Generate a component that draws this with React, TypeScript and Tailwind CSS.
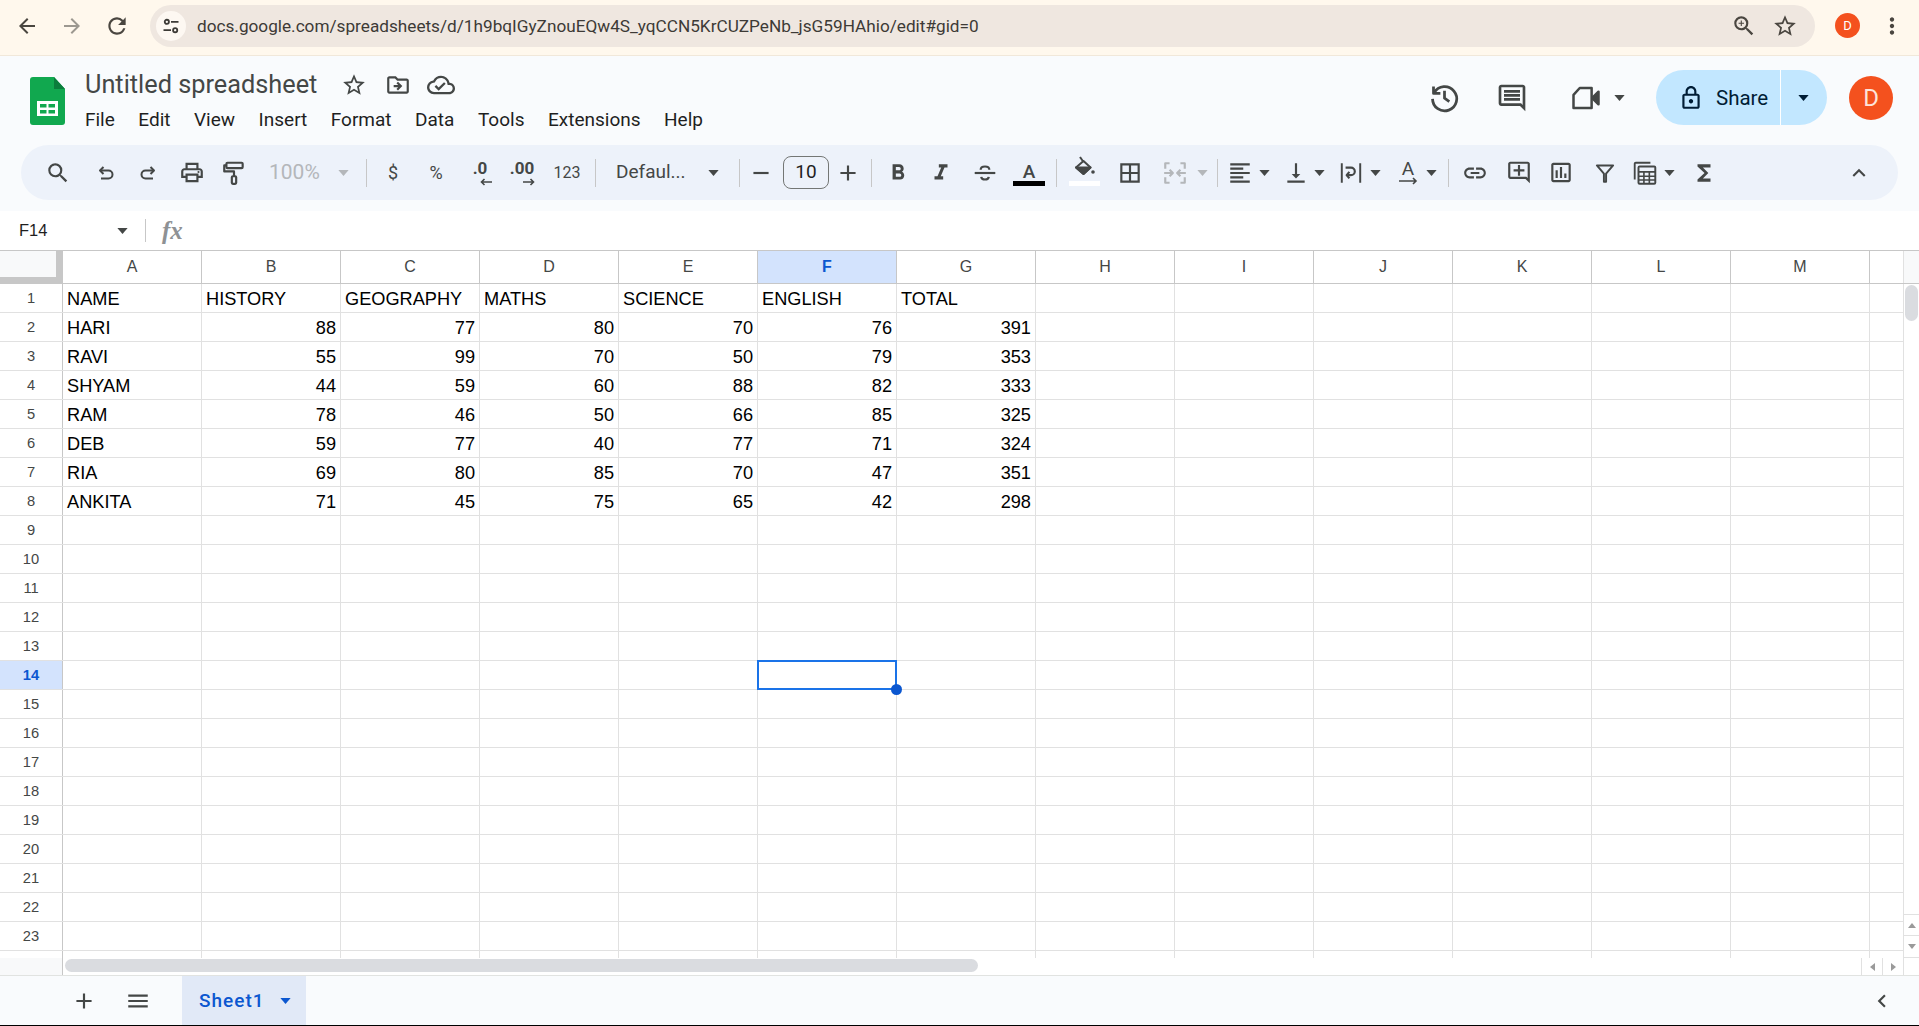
import type { ReactNode } from "react";
import {
  MdArrowBack,
  MdArrowForward,
  MdRefresh,
  MdZoomIn,
  MdStarBorder,
  MdMoreVert,
  MdOutlineDriveFileMove,
  MdOutlineCloudDone,
  MdOutlineComment,
  MdOutlineLock,
  MdSearch,
  MdOutlinePrint,
  MdFormatBold,
  MdFormatItalic,
  MdBorderAll,
  MdFormatAlignLeft,
  MdVerticalAlignBottom,
  MdLink,
  MdOutlineAddComment,
  MdOutlineInsertChart,
  MdFunctions,
  MdExpandLess,
  MdAdd,
  MdRemove,
  MdMenu,
  MdChevronLeft,
} from "react-icons/md";

const COLS = ["A", "B", "C", "D", "E", "F", "G", "H", "I", "J", "K", "L", "M"];

const DATA: string[][] = [
  ["NAME", "HISTORY", "GEOGRAPHY", "MATHS", "SCIENCE", "ENGLISH", "TOTAL"],
  ["HARI", "88", "77", "80", "70", "76", "391"],
  ["RAVI", "55", "99", "70", "50", "79", "353"],
  ["SHYAM", "44", "59", "60", "88", "82", "333"],
  ["RAM", "78", "46", "50", "66", "85", "325"],
  ["DEB", "59", "77", "40", "77", "71", "324"],
  ["RIA", "69", "80", "85", "70", "47", "351"],
  ["ANKITA", "71", "45", "75", "65", "42", "298"],
];

const ROWS = Array.from({ length: 24 }, (_, i) => i + 1);

function Caret({ className = "", color = "fill-[#444746]" }: { className?: string; color?: string }) {
  return (
    <svg viewBox="0 0 12 7" className={`w-[11px] h-[6px] mr-px shrink-0 ${color} ${className}`}>
      <path d="M0 0h12L6 7z" />
    </svg>
  );
}

function Sep({ className = "" }: { className?: string }) {
  return <div className={`w-px h-7 shrink-0 bg-[#c7c7c7] ${className}`} />;
}

// fixed size slot, so the toolbar icons keep their spacing
function Ic({ className = "", children }: { className?: string; children: ReactNode }) {
  return (
    <span className={`flex items-center justify-center w-[26px] h-[26px] shrink-0 text-[#444746] ${className}`}>
      {children}
    </span>
  );
}

function Stroke({ size = 26, children }: { size?: number; children: ReactNode }) {
  return (
    <svg
      viewBox="0 0 24 24"
      width={size}
      height={size}
      fill="none"
      stroke="currentColor"
      strokeWidth="2"
      strokeLinejoin="round"
    >
      {children}
    </svg>
  );
}

function Logo() {
  return (
    <svg viewBox="0 0 35 48" className="w-[35px] h-12 shrink-0 mt-[21px] ml-[30px]">
      <path d="M3 0h21l11 12v33a3 3 0 0 1-3 3H3a3 3 0 0 1-3-3V3a3 3 0 0 1 3-3z" fill="#11a84f" />
      <path d="M24 0l11 12H24z" fill="#0b7d3c" />
      <path d="M7 24h21v15H7z" fill="#fff" />
      <path d="M10 27h6.500v3.500H10zM18.500 27H25v3.500h-6.500zM10 33h6.500v3.500H10zM18.500 33H25v3.500h-6.500z" fill="#11a84f" />
    </svg>
  );
}

function BrowserBar() {
  return (
    <div className="h-14 shrink-0 flex items-start bg-[#fff8ed] border-b border-[#f1e8da] text-[#4a4640]">
      <MdArrowBack className="w-6 h-6 ml-[15px] mt-[14px] shrink-0" />
      <MdArrowForward className="w-6 h-6 ml-[21px] mt-[14px] shrink-0 text-[#9c9890]" />
      <MdRefresh className="w-[26px] h-[26px] ml-5 mt-[13px] shrink-0" />
      <div className="ml-[20px] mt-[5px] w-[1665px] h-[42px] shrink-0 rounded-full bg-[#efe7e0] flex items-center">
        <div className="ml-[6px] w-[30px] h-[30px] rounded-full bg-[#fdf8f2] flex items-center justify-center shrink-0">
          <svg viewBox="0 0 24 24" className="w-5 h-5" fill="none" stroke="#3c3a36" strokeWidth="2.2">
            <circle cx="7" cy="7" r="2.500" />
            <path d="M12 7h9M3 17h9" />
            <circle cx="17" cy="17" r="2.500" />
          </svg>
        </div>
        <span className="ml-[11px] pt-px text-[17.200px] text-[#3d3a36] font-['Roboto',sans-serif] whitespace-nowrap">
          docs.google.com/spreadsheets/d/1h9bqIGyZnouEQw4S_yqCCN5KrCUZPeNb_jsG59HAhio/edit#gid=0
        </span>
        <MdZoomIn className="w-[26px] h-[26px] ml-auto shrink-0" />
        <MdStarBorder className="w-[26px] h-[26px] ml-[15px] mr-[17px] shrink-0" />
      </div>
      <div className="ml-5 mt-[13px] w-[25px] h-[25px] rounded-full bg-[#f4511e] text-white text-[13px] flex items-center justify-center shrink-0 font-['Roboto',sans-serif]">
        D
      </div>
      <MdMoreVert className="w-[26px] h-[26px] ml-[19px] mt-[13px] shrink-0" />
    </div>
  );
}

function AppHeader() {
  const menu = ["File", "Edit", "View", "Insert", "Format", "Data", "Tools", "Extensions", "Help"];
  return (
    <div className="h-[89px] shrink-0 flex items-start bg-[#f9fbfd]">
      <Logo />
      <div className="ml-5 flex flex-col">
        <div className="mt-[15px] h-7 flex items-center text-[#444746]">
          <span className="text-[25.300px] leading-7 font-['Roboto',sans-serif] whitespace-nowrap">Untitled spreadsheet</span>
          <MdStarBorder className="w-[26px] h-[26px] ml-6" />
          <MdOutlineDriveFileMove className="w-[26px] h-[26px] ml-[18px]" />
          <MdOutlineCloudDone className="w-7 h-7 ml-4" />
        </div>
        <div className="mt-[9px] h-6 flex items-center gap-[23.500px] text-[19px] text-[#1f1f1f] font-['Roboto',sans-serif]">
          {menu.map((m) => (
            <span key={m}>{m}</span>
          ))}
        </div>
      </div>
      <div className="ml-auto mr-[26px] mt-[14px] flex items-center text-[#444746]">
        <Stroke size={33}>
          <path d="M4 4v5h5" />
          <path d="M4.500 8.500A8.800 8.800 0 1 1 3.300 13" />
          <path d="M12 7v5.500l3.500 2.500" />
        </Stroke>
        <MdOutlineComment className="w-8 h-8 ml-[35px]" />
        <span className="ml-[43px]">
          <svg viewBox="0 0 24 24" width="30" height="30" fill="none" stroke="currentColor" strokeWidth="2" strokeLinejoin="round">
            <path d="M2 9.500 7 4h9.500v16H2z" />
            <path d="M17 12l5-5v10z" fill="currentColor" />
          </svg>
        </span>
        <Caret className="ml-[13px]" />
        <div className="ml-[30px] h-[55px] flex text-[#001d35] bg-[#c2e7ff] rounded-full overflow-hidden font-['Roboto',sans-serif]">
          <div className="w-[125px] pl-[22px] flex items-center border-r border-white">
            <MdOutlineLock className="w-[26px] h-[26px]" />
            <span className="ml-3 pt-px text-[20.500px]">Share</span>
          </div>
          <div className="w-[46px] flex items-center justify-center">
            <Caret color="fill-[#001d35]" />
          </div>
        </div>
        <div className="ml-[22px] w-11 h-11 rounded-full bg-[#f4511e] text-[#fde3da] text-[24px] flex items-center justify-center font-['Roboto',sans-serif]">
          D
        </div>
      </div>
    </div>
  );
}

function Toolbar() {
  return (
    <div className="h-[66px] shrink-0 bg-[#f9fbfd] px-[21px]">
      <div className="h-[55px] rounded-full bg-[#edf2fa] flex items-center pl-6 font-['Roboto',sans-serif] text-[#444746]">
        <Ic>
          <MdSearch size={30} />
        </Ic>
        <Ic className="ml-[22px]">
          <Stroke size={24}>
            <path d="M9.500 6 6 9.500 9.500 13" />
            <path d="M6 9.500h8.500a4 4 0 0 1 0 8H7" />
          </Stroke>
        </Ic>
        <Ic className="ml-4">
          <Stroke size={24}>
            <path d="M14.500 6 18 9.500 14.500 13" />
            <path d="M18 9.500H9.500a4 4 0 0 0 0 8H17" />
          </Stroke>
        </Ic>
        <Ic className="ml-[18px]">
          <MdOutlinePrint size={27} />
        </Ic>
        <Ic className="ml-4">
          <Stroke>
            <rect x="5" y="2.500" width="15" height="5" rx="1" />
            <path d="M5 5H3v5.500h9V15" />
            <rect x="10" y="15" width="4" height="7" rx="1" />
          </Stroke>
        </Ic>
        <span className="ml-[22px] w-[49px] text-[21px] text-[#b4b7ba] shrink-0">100%</span>
        <Caret className="ml-5" color="fill-[#b4b7ba]" />
        <Sep className="ml-4" />
        <Ic className="ml-[13px] text-[18px]">$</Ic>
        <Ic className="ml-[17px] text-[18px]">%</Ic>
        <Ic className="ml-[18px] relative">
          <span className="text-[17px] font-bold leading-none -mt-2">.0</span>
          <svg viewBox="0 0 12 8" className="absolute w-3 h-2 right-[1px] bottom-0" fill="none" stroke="currentColor" strokeWidth="1.600">
            <path d="M12 4H1.500M4.500 1 1.500 4l3 3" />
          </svg>
        </Ic>
        <Ic className="ml-4 relative">
          <span className="text-[17px] font-bold leading-none -mt-2">.00</span>
          <svg viewBox="0 0 12 8" className="absolute w-3 h-2 right-0 bottom-0" fill="none" stroke="currentColor" strokeWidth="1.600">
            <path d="M0 4h10.500M7.500 1l3 3-3 3" />
          </svg>
        </Ic>
        <Ic className="ml-[19px] text-[16px]">123</Ic>
        <Sep className="ml-[15px]" />
        <span className="ml-5 w-[73px] text-[19px] shrink-0 whitespace-nowrap">Defaul...</span>
        <Caret className="ml-[19px]" />
        <Sep className="ml-[19px]" />
        <Ic className="ml-2">
          <MdRemove size={26} />
        </Ic>
        <div className="ml-[9px] w-[46px] h-[33px] shrink-0 border border-[#747775] rounded-lg flex items-center justify-center text-[19px] text-[#1f1f1f]">
          10
        </div>
        <Ic className="ml-[6px]">
          <MdAdd size={28} />
        </Ic>
        <Sep className="ml-[10px]" />
        <Ic className="ml-[13px]">
          <MdFormatBold size={32} />
        </Ic>
        <Ic className="ml-[17px]">
          <MdFormatItalic size={30} />
        </Ic>
        <Ic className="ml-[18px]">
          <Stroke>
            <path d="M2.500 12h19" />
            <path d="M8 9c0-1.800 1.700-3 4-3s4 1.200 4 3" />
            <path d="M8.500 15.500c.2 1.700 1.700 2.500 3.500 2.500s3.300-.8 3.500-2.500" />
          </Stroke>
        </Ic>
        <div className="ml-[15px] mt-[3px] w-8 h-6 shrink-0 flex flex-col items-center justify-between">
          <span className="text-[19px] font-medium leading-[19px]">A</span>
          <span className="w-8 h-[5px] bg-black" />
        </div>
        <Sep className="ml-[11px]" />
        <div className="ml-3 mb-[3px] w-[31px] h-[30px] shrink-0 flex flex-col items-center justify-between">
          <svg viewBox="0 0 24 24" width="24" height="24" className="-ml-[2px]" fill="none" stroke="currentColor" strokeWidth="2" strokeLinejoin="round">
            <path d="M8 1l3.500 5" />
            <path d="M4 11.500 11.500 5l7 6.500-7 6.500z" />
            <path d="M4 11.500h14.500l-7 6.500z" fill="currentColor" />
            <circle cx="21" cy="16" r="1.800" fill="currentColor" stroke="none" />
          </svg>
          <span className="w-[31px] h-[5px] bg-white" />
        </div>
        <Ic className="ml-[17px]">
          <MdBorderAll size={30} />
        </Ic>
        <Ic className="ml-[19px] text-[#b4b7ba]">
          <Stroke>
            <path d="M3 8V3h4M3 16v5h4M21 8V3h-4M21 16v5h-4" />
            <path d="M2 12h8M7 9l3 3-3 3M22 12h-8M17 9l-3 3 3 3" />
          </Stroke>
        </Ic>
        <Caret className="ml-[9px]" color="fill-[#b4b7ba]" />
        <Sep className="ml-2" />
        <Ic className="ml-[9px]">
          <MdFormatAlignLeft size={30} />
        </Ic>
        <Caret className="ml-[6px]" />
        <Ic className="ml-3">
          <MdVerticalAlignBottom size={28} />
        </Ic>
        <Caret className="ml-[5px]" />
        <Ic className="ml-3">
          <Stroke>
            <path d="M3.500 3v18M20.500 3v18" strokeWidth="1.800" />
            <path d="M7 7h5a3.500 3.500 0 0 1 0 7H8" />
            <path d="M10.500 11 8 14l2.500 3" />
          </Stroke>
        </Ic>
        <Caret className="ml-[6px]" />
        <Ic className="ml-[13px] flex-col">
          <span className="text-[19px] leading-[17px] font-normal">A</span>
          <svg viewBox="0 0 20 8" className="w-[20px] h-2" fill="none" stroke="currentColor" strokeWidth="1.600">
            <path d="M1 4h17M15 1l3 3-3 3" />
          </svg>
        </Ic>
        <Caret className="ml-[5px]" />
        <Sep className="ml-[10px]" />
        <Ic className="ml-[13px]">
          <MdLink size={30} />
        </Ic>
        <Ic className="ml-[18px]">
          <MdOutlineAddComment size={27} />
        </Ic>
        <Ic className="ml-4">
          <MdOutlineInsertChart size={27} />
        </Ic>
        <Ic className="ml-[18px]">
          <Stroke>
            <path d="M4.500 5h15l-6.500 7.500V20h-2v-7.500z" strokeWidth="1.800" />
          </Stroke>
        </Ic>
        <Ic className="ml-[14px]">
          <Stroke size={28}>
            <path d="M2.500 18V3.500a1 1 0 0 1 1-1H17" strokeWidth="1.700" />
            <rect x="6" y="6" width="15.500" height="16" rx="1" strokeWidth="1.800" />
            <path d="M6 11h15.500M6 15h15.500M6 18.500h15.500M11 11v11M16 11v11" strokeWidth="1.500" />
          </Stroke>
        </Ic>
        <Caret className="ml-[6px]" />
        <Ic className="ml-[15px]">
          <MdFunctions size={28} />
        </Ic>
        <Ic className="ml-auto mr-[26px]">
          <MdExpandLess size={30} />
        </Ic>
      </div>
    </div>
  );
}

function FormulaBar() {
  return (
    <div className="h-10 shrink-0 bg-white border-b border-[#c7c7c7] flex items-center">
      <span className="ml-[19px] w-[86px] text-[16.500px] text-[#1f1f1f] font-['Liberation_Sans',sans-serif]">F14</span>
      <Caret className="ml-3" />
      <Sep className="ml-4 h-[23px]" />
      <span className="ml-4 text-[25px] font-bold italic text-[#8e9194] font-['Liberation_Serif',serif]">fx</span>
    </div>
  );
}

function RowCell({ row, col }: { row: number; col: number }) {
  const text = DATA[row - 1]?.[col];
  const selected = row === 14 && col === 5;
  return (
    <div
      className={`relative w-[139px] shrink-0 h-full border-r border-[#e1e1e1] flex items-center pt-1 px-1 text-[18.200px] text-black ${
        col === 0 || row === 1 ? "justify-start" : "justify-end"
      }`}
    >
      {text}
      {selected && (
        <div className="absolute -left-px -top-px w-[140px] h-[30px] border-2 border-[#1a73e8] z-10">
          <span className="absolute -right-[7px] -bottom-[7px] w-[11px] h-[11px] rounded-full bg-[#0b57d0]" />
        </div>
      )}
    </div>
  );
}

function Grid() {
  return (
    <div className="h-[707px] shrink-0 flex bg-white font-['Liberation_Sans',sans-serif]">
      <div className="w-[1904px] shrink-0 overflow-hidden">
        <div className="h-[33px] flex border-b border-[#c7c7c7]">
          <div className="w-[63px] shrink-0 h-full border-r border-[#c7c7c7] bg-[#c7c7c7] pr-[6px] pb-[6px]">
            <div className="h-full bg-[#f8f9fa]" />
          </div>
          {COLS.map((c) => (
            <div
              key={c}
              className={`w-[139px] shrink-0 flex items-center justify-center border-r border-[#c7c7c7] text-[16px] ${
                c === "F" ? "bg-[#d3e3fd] text-[#0b57d0] font-bold" : "text-[#444746]"
              }`}
            >
              {c}
            </div>
          ))}
          <div className="w-[34px] shrink-0 border-r border-[#e1e1e1]" />
        </div>
        {ROWS.map((r) => (
          <div key={r} className="h-[29px] flex border-b border-[#e1e1e1]">
            <div
              className={`w-[63px] shrink-0 flex items-center justify-center border-r border-[#c7c7c7] text-[14.700px] ${
                r === 14 ? "bg-[#d3e3fd] text-[#0b57d0] font-bold" : "text-[#444746]"
              }`}
            >
              {r < 24 ? r : null}
            </div>
            {COLS.map((_, i) => (
              <RowCell key={i} row={r} col={i} />
            ))}
            <div className="w-[34px] shrink-0 border-r border-[#e1e1e1]" />
          </div>
        ))}
      </div>
      <div className="w-[15px] shrink-0 flex flex-col">
        <div className="h-[33px] shrink-0 bg-[#f8f9fa] border-b border-[#c7c7c7]" />
        <div className="mt-px ml-px w-[13px] h-9 rounded-full bg-[#dadce0]" />
        <div className="mt-auto h-[22px] flex items-center justify-center border-y border-[#e1e1e1]">
          <svg viewBox="0 0 8 5" className="w-2 h-[5px] fill-[#9a9a9a]">
            <path d="M4 0l4 5H0z" />
          </svg>
        </div>
        <div className="h-[22px] flex items-center justify-center border-b border-[#e1e1e1]">
          <svg viewBox="0 0 8 5" className="w-2 h-[5px] fill-[#9a9a9a]">
            <path d="M0 0h8L4 5z" />
          </svg>
        </div>
      </div>
    </div>
  );
}

function HScroll() {
  return (
    <div className="h-[18px] shrink-0 flex bg-white border-b border-[#e1e3e1]">
      <div className="w-[63px] shrink-0 bg-[#f8f9fa] border-r border-[#c7c7c7]" />
      <div className="ml-[2px] mt-px w-[913px] h-[13px] rounded-full bg-[#dadce0]" />
      <div className="ml-auto w-[43px] flex">
        <div className="w-[22px] flex items-center justify-center border-x border-[#e1e1e1]">
          <svg viewBox="0 0 5 8" className="w-[5px] h-2 fill-[#9a9a9a]">
            <path d="M0 4l5-4v8z" />
          </svg>
        </div>
        <div className="w-[21px] flex items-center justify-center border-r border-[#e1e1e1]">
          <svg viewBox="0 0 5 8" className="w-[5px] h-2 fill-[#9a9a9a]">
            <path d="M5 4L0 0v8z" />
          </svg>
        </div>
      </div>
      <div className="w-[15px] shrink-0" />
    </div>
  );
}

function SheetTabs() {
  return (
    <div className="flex-1 flex items-stretch bg-[#f9fbfd] border-b border-black text-[#444746]">
      <Ic className="ml-[71px] self-center">
        <MdAdd size={28} />
      </Ic>
      <Ic className="ml-7 self-center">
        <MdMenu size={30} />
      </Ic>
      <div className="ml-[31px] w-[124px] pl-[17px] pt-px flex items-center bg-[#e1e9f7] text-[#0b57d0] font-['Roboto',sans-serif]">
        <span className="text-[19px] font-medium tracking-[1px]">Sheet1</span>
        <Caret className="ml-[15px]" color="fill-[#0b57d0]" />
      </div>
      <Ic className="ml-auto mr-6 self-center">
        <MdChevronLeft size={30} />
      </Ic>
    </div>
  );
}

export default function App() {
  return (
    <div className="w-[1919px] h-[1026px] overflow-hidden flex flex-col bg-white">
      <BrowserBar />
      <AppHeader />
      <Toolbar />
      <FormulaBar />
      <Grid />
      <HScroll />
      <SheetTabs />
    </div>
  );
}
